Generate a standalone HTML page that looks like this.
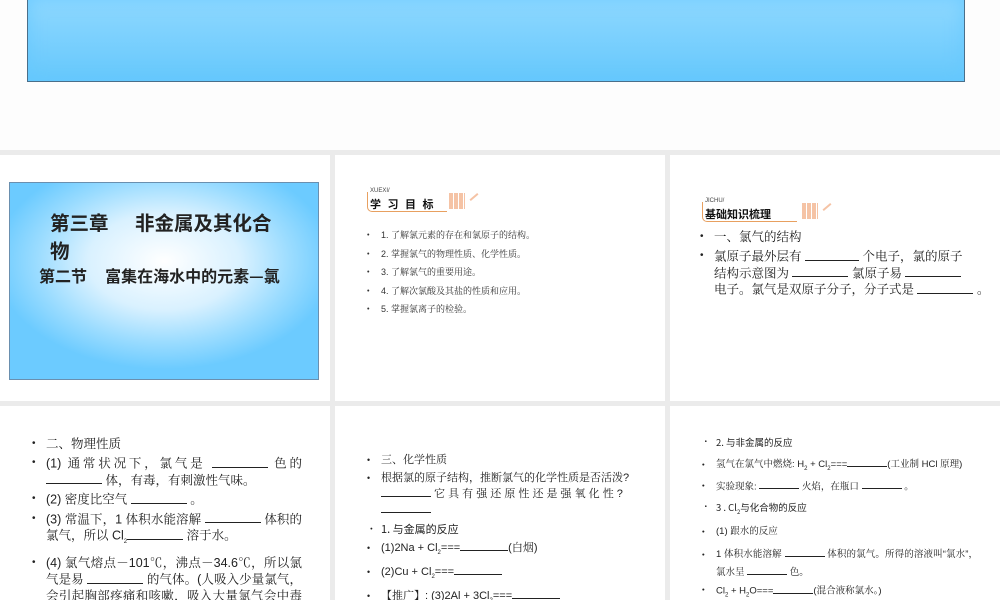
<!DOCTYPE html>
<html><head><meta charset="utf-8"><style>
*{margin:0;padding:0;box-sizing:border-box}
body{width:1000px;height:600px;overflow:hidden;background:#ebebeb;font-family:"Liberation Sans","Noto Serif CJK SC","Noto Sans CJK SC",sans-serif;color:#222;position:relative}
.top{position:absolute;left:0;top:0;width:1000px;height:150px;background:#fdfdfd}
.topbox{position:absolute;left:27px;top:-2px;width:938px;height:84px;border:1px solid #4a6f8a;border-top:none;background:linear-gradient(#8fd8ff,#66c8fc);box-shadow:inset 0 0 18px rgba(100,200,255,.8)}
.s{position:absolute;background:#fff;overflow:hidden}
.blue{position:absolute;left:9px;top:27px;width:310px;height:198px;border:1px solid #6a8fae;background:radial-gradient(ellipse 55% 55% at 50% 40%,#fff 0%,#d9f1ff 45%,#9bdcff 75%,#6ccbff 100%)}
ul{list-style:none}
li{position:relative;padding-left:16px;text-align:justify}
li:before{content:"•";position:absolute;left:2px;top:0;font-size:0.8em}
.u{display:inline-block;border-bottom:1px solid #222;height:1em;vertical-align:baseline}
sub{font-size:6px}
.hd{position:absolute;height:28px}
.hd .sm{font-size:6px;color:#444;position:absolute;left:3px;top:0}
.hd .big{position:absolute;left:3px;top:8px;font-size:11px;font-weight:bold;letter-spacing:2px;font-family:"Noto Sans CJK SC",sans-serif;color:#111}
.hd .ln{position:absolute;left:0;top:4px;width:80px;height:20px;border-left:1px solid #e8a060;border-bottom:1px solid #e8a060;border-bottom-left-radius:5px}
.hd .sq{position:absolute;width:16px;height:16px;background:repeating-linear-gradient(90deg,#f5c3a5 0 4px,#fff 4px 5px)}
</style></head><body>
<div class="top"><div class="topbox"></div></div>

<div class="s" style="left:0;top:155px;width:330px;height:246px">
 <div class="blue">
  <div style="position:absolute;left:40px;top:25px;font-size:19.5px;font-weight:bold;line-height:28px;font-family:'Noto Sans CJK SC',sans-serif;width:236px">第三章&nbsp;&nbsp;&nbsp;&nbsp;&nbsp;&nbsp;非金属及其化合物</div>
  <div style="position:absolute;left:29px;top:80px;font-size:16px;font-weight:bold;font-family:'Noto Sans CJK SC',sans-serif;white-space:nowrap">第二节&nbsp;&nbsp;&nbsp;&nbsp;&nbsp;富集在海水中的元素—氯</div>
 </div>
</div>

<div class="s" style="left:335px;top:155px;width:330px;height:246px">
 <div class="hd" style="left:32px;top:33px;width:120px"><div class="ln"></div><span class="sm">XUEXI/</span><span class="big">学 习 目 标</span><div class="sq" style="left:82px;top:5px"></div><div style="position:absolute;left:102px;top:8px;width:10px;height:2px;background:#f5c3a5;transform:rotate(-40deg)"></div></div>
 <ul style="position:absolute;left:30px;top:71px;font-size:9px;line-height:18.5px;color:#333">
  <li>1. 了解氯元素的存在和氯原子的结构。</li>
  <li>2. 掌握氯气的物理性质、化学性质。</li>
  <li>3. 了解氯气的重要用途。</li>
  <li>4. 了解次氯酸及其盐的性质和应用。</li>
  <li>5. 掌握氯离子的检验。</li>
 </ul>
</div>

<div class="s" style="left:670px;top:155px;width:330px;height:246px">
 <div class="hd" style="left:32px;top:43px;width:120px"><div class="ln" style="width:95px"></div><span class="sm">JICHU/</span><span class="big" style="letter-spacing:0">基础知识梳理</span><div class="sq" style="left:100px;top:5px"></div><div style="position:absolute;left:120px;top:8px;width:10px;height:2px;background:#f5c3a5;transform:rotate(-40deg)"></div></div>
 <ul style="position:absolute;left:28px;top:74px;font-size:12.5px;line-height:16px;width:300px">
  <li style="margin-bottom:3px">一、氯气的结构</li>
  <li style="text-align:left;white-space:nowrap">氯原子最外层有 <span class="u" style="width:54px"></span> 个电子，氯的原子<br>结构示意图为 <span class="u" style="width:56px"></span> 氯原子易 <span class="u" style="width:56px"></span><br>电子。氯气是双原子分子，分子式是 <span class="u" style="width:56px"></span> 。</li>
 </ul>
</div>

<div class="s" style="left:0;top:406px;width:330px;height:194px">
 <ul style="position:absolute;left:30px;top:30px;font-size:12.5px;line-height:16px;width:272px">
  <li style="margin-bottom:3px">二、物理性质</li>
  <li style="margin-bottom:3px">(1) 通常状况下，氯气是 <span class="u" style="width:56px"></span> 色的 <span class="u" style="width:56px"></span> 体，有毒，有刺激性气味。</li>
  <li style="margin-bottom:3px">(2) 密度比空气 <span class="u" style="width:56px"></span> 。</li>
  <li style="margin-bottom:5px">(3) 常温下，1 体积水能溶解 <span class="u" style="width:56px"></span> 体积的氯气，所以 Cl<sub>2</sub><span class="u" style="width:56px"></span> 溶于水。</li>
  <li>(4) 氯气熔点－101℃，沸点－34.6℃，所以氯气是易 <span class="u" style="width:56px"></span> 的气体。(人吸入少量氯气，会引起胸部疼痛和咳嗽，吸入大量氯气会中毒致死，所以，在实验室里闻氯气气味时</li>
 </ul>
</div>

<div class="s" style="left:335px;top:406px;width:330px;height:194px">
 <ul style="position:absolute;left:30px;top:46px;font-size:11px;line-height:16px;width:276px">
  <li style="margin-bottom:2px">三、化学性质</li>
  <li>根据氯的原子结构，推断氯气的化学性质是否活泼?<br><span class="u" style="width:50px"></span> 它 具 有 强 还 原 性 还 是 强 氧 化 性 ?<br><span class="u" style="width:50px"></span></li>
  <li style="margin-top:3px;font-family:'Noto Sans CJK SC',sans-serif">1. 与金属的反应</li>
  <li style="margin-top:3px">(1)2Na + Cl<sub>2</sub>===<span class="u" style="width:48px"></span>(白烟)</li>
  <li style="margin-top:3px">(2)Cu + Cl<sub>2</sub>===<span class="u" style="width:48px"></span></li>
  <li style="margin-top:3px">【推广】: (3)2Al + 3Cl<sub>2</sub>===<span class="u" style="width:48px"></span></li>
  <li style="margin-top:3px">(4)2Fe + 3Cl<sub>2</sub>===<span class="u" style="width:48px"></span></li>
 </ul>
</div>

<div class="s" style="left:670px;top:406px;width:330px;height:194px">
 <ul style="position:absolute;left:30px;top:30px;font-size:9.5px;line-height:12px;width:278px">
  <li style="margin-bottom:8px;font-family:'Noto Sans CJK SC',sans-serif">2. 与非金属的反应</li>
  <li style="line-height:18px;margin-bottom:2px">氢气在氯气中燃烧: H<sub>2</sub> + Cl<sub>2</sub>===<span class="u" style="width:40px"></span>(工业制 HCl 原理)</li>
  <li style="margin-bottom:8px">实验现象: <span class="u" style="width:40px"></span> 火焰，在瓶口 <span class="u" style="width:40px"></span> 。</li>
  <li style="margin-bottom:8px;font-family:'Noto Sans CJK SC',sans-serif">3 . Cl<sub>2</sub>与化合物的反应</li>
  <li style="margin-bottom:8px">(1) 跟水的反应</li>
  <li style="line-height:18px;margin-bottom:2px">1 体积水能溶解 <span class="u" style="width:40px"></span> 体积的氯气。所得的溶液叫“氯水”，氯水呈 <span class="u" style="width:40px"></span> 色。</li>
  <li>Cl<sub>2</sub> + H<sub>2</sub>O===<span class="u" style="width:40px"></span>(混合液称氯水。)</li>
 </ul>
</div>
</body></html>
